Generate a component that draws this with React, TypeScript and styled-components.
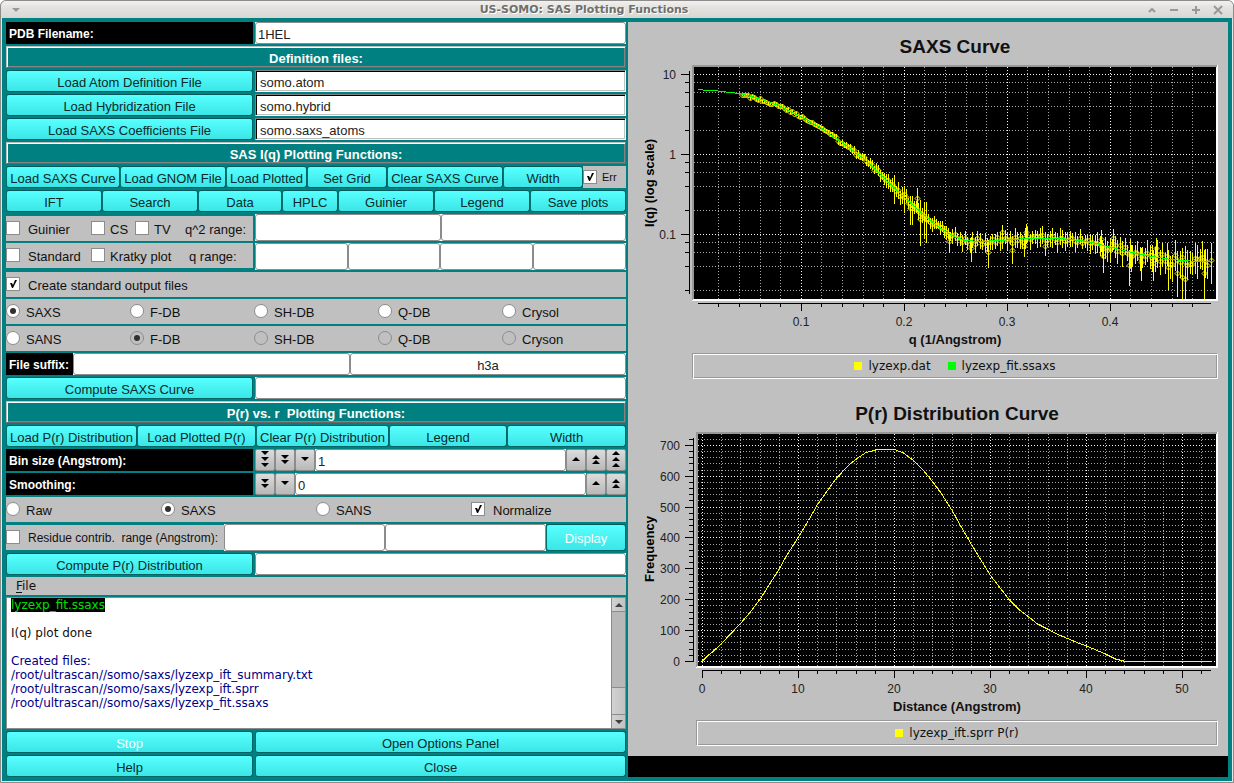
import React, { useId } from 'react';
import styled, { createGlobalStyle, css } from 'styled-components';

const TEAL = '#008080';
const GRAY = '#c0c0c0';
const SANS = '"Liberation Sans", Arial, sans-serif';
const DEJAVU = '"DejaVu Sans", Verdana, sans-serif';

const GlobalStyle = createGlobalStyle`
  *, *::before, *::after { box-sizing: border-box; }
  body { margin: 0; background: #fff; font-family: ${SANS}; font-size: 13px; color: #111; }
  button, input { font: inherit; margin: 0; color: inherit; }
`;

/* ---------- window frame ---------- */

const Window = styled.div`
  display: flex;
  flex-direction: column;
  min-height: 100vh;
  background: ${TEAL};
  border: 1px solid #8e8c8a;
  border-radius: 6px 6px 0 0;
  box-shadow: inset 0 0 0 1px #e6e4e2;
`;

const TitleBar = styled.header`
  display: flex;
  align-items: center;
  height: 17px;
  padding: 0 8px;
  border-radius: 5px 5px 0 0;
  background: linear-gradient(#f2f1ef, #e4e2df 40%, #d9d7d3);
`;

const WindowTitle = styled.h1`
  flex: 1;
  margin: 0;
  text-align: center;
  font: bold 11px/17px ${DEJAVU};
  color: #6f6f6c;
  text-shadow: 1px 1px 0 #fff;
`;

const TitleButtons = styled.div`
  display: flex;
  gap: 8px;
`;

const TitleButton = styled.button`
  display: flex;
  width: 14px;
  height: 14px;
  padding: 0;
  border: 0;
  background: none;
  svg { fill: none; stroke: #9a9896; stroke-width: 2; }
`;

const Content = styled.main`
  flex: 1;
  display: grid;
  grid-template-columns: 620fr 600fr;
  gap: 2px;
  padding: 4px 5px 5px;
`;

const Controls = styled.section`
  display: flex;
  flex-direction: column;
  gap: 2px;
  min-width: 0;
`;

/* ---------- left column parts ---------- */

const Row = styled.div<{ $cols?: string; $h?: number; $align?: string; $gap?: number }>`
  display: grid;
  grid-template-columns: ${(p) => p.$cols ?? '247fr 371fr'};
  column-gap: ${(p) => p.$gap ?? 2}px;
  height: ${(p) => p.$h ?? 22}px;
  flex: none;
  align-items: ${(p) => p.$align ?? 'stretch'};
`;

const BlackLabel = styled.label`
  background: #000;
  color: #fff;
  font-weight: bold;
  font-size: 12px;
  line-height: 22px;
  padding: 1px 0 0 3px;
  height: 22px;
  overflow: hidden;
  white-space: nowrap;
`;

const Banner = styled.h2`
  flex: none;
  margin: 0;
  height: 22px;
  padding-top: 1px;
  border: 1px solid;
  border-color: ${GRAY} #6a6464 #6a6464 ${GRAY};
  box-shadow: inset 1px 1px 0 #fff, inset -1px -1px 0 #8a8282;
  color: #fff;
  font-size: 13px;
  line-height: 22px;
  text-align: center;
  white-space: pre;
`;

const Button = styled.button`
  min-width: 0;
  height: 100%;
  padding: 2px 0 0;
  border: 1px solid;
  border-color: #005c5c #006464 #006464 #007070;
  border-radius: 3px;
  background: linear-gradient(#58ffff, #3ce6e6);
  color: #0a2a2a;
  text-align: center;
  white-space: nowrap;
  &:disabled { color: #fff; }
`;

const FieldBox = styled.span`
  display: block;
  height: 100%;
  min-width: 0;
  background: #fff;
`;

const FieldInput = styled.input<{ $center?: boolean }>`
  display: block;
  width: 100%;
  height: 100%;
  padding: 2px 2px 0;
  border: 1px solid #8c8c8c;
  border-radius: 3px;
  background: #fff;
  color: #222;
  text-align: ${(p) => (p.$center ? 'center' : 'left')};
  outline: 0;
`;

const SunkenInput = styled.input`
  width: 100%;
  min-width: 0;
  padding: 2px 4px 0;
  border: 1px solid;
  border-color: #808080 #fff #fff #808080;
  box-shadow: inset 1px 1px 0 #000, inset -1px -1px 0 ${GRAY};
  background: #fff;
  color: #222;
  outline: 0;
`;

const GrayCell = styled.div<{ $cols?: string; $h?: number }>`
  display: grid;
  grid-template-columns: ${(p) => p.$cols ?? '1fr'};
  align-items: center;
  flex: none;
  height: ${(p) => p.$h ?? 25}px;
  background: ${GRAY};
  white-space: pre;
`;

const Option = styled.label<{ $gap: number; $small?: boolean }>`
  display: flex;
  align-items: center;
  gap: ${(p) => p.$gap}px;
  min-width: 0;
  line-height: 15px;
  font-size: ${(p) => (p.$small ? 12 : 13)}px;
  span { padding-top: 2px; }
  input { margin-bottom: 1px; }
`;

const Plain = styled.span`
  padding-top: 2px;
  line-height: 15px;
`;

const markBase = css`
  appearance: none;
  flex: none;
  position: relative;
  width: 14px;
  height: 14px;
  border: 1px solid #8c8c8c;
  background: #fff;
`;

const Tick = styled.input`
  ${markBase}
  &:checked::before {
    content: '';
    display: block;
    width: 12px;
    height: 12px;
    background: #000;
    clip-path: polygon(3px 5px, 5px 5px, 6px 7px, 8px 2px, 10px 2px, 6px 10px, 5px 10px);
  }
`;

const Radio = styled.input`
  ${markBase}
  border-radius: 50%;
  &:checked::before {
    content: '';
    display: block;
    width: 6px;
    height: 6px;
    margin: 3px;
    border-radius: 50%;
    background: #303030;
  }
  &:disabled { background: transparent; }
`;

const ErrOption = styled.label`
  display: flex;
  align-items: center;
  gap: 5px;
  height: 22px;
  background: ${GRAY};
  font-size: 11px;
`;

const Counter = styled.div`
  display: flex;
  min-width: 0;
`;

const StepButton = styled.button`
  flex: none;
  width: 20px;
  height: 22px;
  padding: 0;
  border: 1px solid #8c8c8c;
  border-radius: 2px;
  background: linear-gradient(#dcdcdc, #b8b8b8);
  svg { display: block; margin: 0 auto; }
`;

const CounterField = styled.div`
  flex: 1;
  min-width: 0;
  height: 22px;
`;

const MenuBar = styled.nav`
  flex: none;
  height: 18px;
  padding-left: 10px;
  background: ${GRAY};
`;

const MenuItem = styled.button`
  display: block;
  padding: 0;
  border: 0;
  background: none;
  font: 12px/18px ${DEJAVU};
  u { text-underline-offset: 2px; }
`;

const LogBox = styled.div`
  display: flex;
  flex: 1 0 132px;
  border: 1px solid #8c8c8c;
  background: #fff;
`;

const LogText = styled.div`
  flex: 1;
  min-width: 0;
  padding-left: 4px;
  overflow: hidden;
  font: 12px/14px ${DEJAVU};
  white-space: pre;
`;

const LogLine = styled.div<{ $color?: string }>`
  height: 14px;
  color: ${(p) => p.$color ?? '#111'};
  mark { display: inline-block; background: #000; color: #00e000; }
`;

const ScrollBar = styled.div`
  display: flex;
  flex-direction: column;
  width: 14px;
  border-left: 1px solid #8c8c8c;
  background: #b8b8b8;
`;

const ScrollButton = styled.button<{ $down?: boolean }>`
  height: 14px;
  padding: 0;
  border: 0;
  border-top: ${(p) => (p.$down ? '1px solid #8c8c8c' : '0')};
  border-bottom: ${(p) => (p.$down ? '0' : '1px solid #8c8c8c')};
  background: linear-gradient(90deg, #d2d2d2, #c2c2c2);
  svg { display: block; margin: 0 auto; fill: #404040; }
`;

const ScrollTrack = styled.div`
  flex: 1;
  display: flex;
  align-items: flex-end;
`;

const ScrollThumb = styled.div`
  width: 100%;
  height: 27px;
  border-top: 1px solid #8c8c8c;
  background: linear-gradient(90deg, #d2d2d2, #c2c2c2);
`;

/* ---------- right column parts ---------- */

const Plots = styled.section`
  display: flex;
  flex-direction: column;
  min-width: 0;
  background: #000;
`;

const PlotPanel = styled.div`
  display: flex;
  flex-direction: column;
  gap: 20px;
  padding: 10px 0;
  background: ${GRAY};
`;

const ChartBox = styled.figure`
  margin: 0;
`;

const ChartTitle = styled.h3<{ $inset: number }>`
  margin: 0 10px 3px ${(p) => p.$inset}px;
  font-size: 19px;
  line-height: 30px;
  text-align: center;
`;

const Canvas = styled.svg`
  display: block;
  width: 100%;
  height: auto;
  font-family: ${SANS};
  font-size: 12px;
`;

const AxisTitle = styled.div<{ $inset: number }>`
  margin: 0 10px 4px ${(p) => p.$inset}px;
  font-weight: bold;
  line-height: 19px;
  text-align: center;
`;

const Legend = styled.figcaption<{ $inset: number }>`
  display: flex;
  align-items: center;
  justify-content: center;
  gap: 17px;
  height: 26px;
  margin: 0 10px 0 ${(p) => p.$inset}px;
  border: 1px solid;
  border-color: #989898 #fff #fff #989898;
  box-shadow: inset 1px 1px 0 #fff, inset -1px -1px 0 #989898;
  font: 12px/14px ${DEJAVU};
`;

const LegendItem = styled.span<{ $color: string }>`
  display: flex;
  align-items: center;
  gap: 6px;
  &::before {
    content: '';
    width: 8px;
    height: 8px;
    background: ${(p) => p.$color};
  }
`;

/* ---------- small building blocks ---------- */

type FieldProps = { label: string; value?: string; center?: boolean; id?: string };
const Field = ({ label, value = '', center, id }: FieldProps) => (
  <FieldBox>
    <FieldInput id={id} aria-label={label} defaultValue={value} $center={center} />
  </FieldBox>
);

const CheckOption = ({ text, checked, gap = 8, small }: { text: string; checked?: boolean; gap?: number; small?: boolean }) => (
  <Option $gap={gap} $small={small}>
    <Tick type="checkbox" defaultChecked={checked} />
    <span>{text}</span>
  </Option>
);

const RadioOption = ({ text, name, checked, disabled }: { text: string; name: string; checked?: boolean; disabled?: boolean }) => (
  <Option $gap={6}>
    <Radio type="radio" name={name} defaultChecked={checked} disabled={disabled} />
    <span>{text}</span>
  </Option>
);

const arrowTops: Record<number, number[]> = { 1: [7], 2: [5, 10], 3: [1, 7, 13] };

const Step = ({ count, up }: { count: number; up?: boolean }) => (
  <StepButton aria-label={`${up ? 'Increase' : 'Decrease'} by step ${count}`}>
    <svg width="10" height="20" viewBox="0 0 10 20">
      {arrowTops[count].map((y) => (
        <path key={y} d={up ? `M1 ${y + 4}h8l-4 -4z` : `M1 ${y}h8l-4 4z`} />
      ))}
    </svg>
  </StepButton>
);

const CounterRow = ({ label, value, steps }: { label: string; value: string; steps: number }) => {
  const id = useId();
  const sizes = Array.from({ length: steps }, (_, i) => i + 1);
  return (
    <Row>
      <BlackLabel htmlFor={id}>{label}</BlackLabel>
      <Counter>
        {[...sizes].reverse().map((n) => <Step key={n} count={n} />)}
        <CounterField><Field id={id} label={label} value={value} /></CounterField>
        {sizes.map((n) => <Step key={n} count={n} up />)}
      </Counter>
    </Row>
  );
};

const ButtonRow = ({ items }: { items: [string, number][] }) => (
  <Row $gap={0} $cols={items.map(([, w]) => `${w}fr`).join(' ')}>
    {items.map(([text]) => <Button key={text}>{text}</Button>)}
  </Row>
);

const definitionFiles = [
  ['Load Atom Definition File', 'somo.atom'],
  ['Load Hybridization File', 'somo.hybrid'],
  ['Load SAXS Coefficients File', 'somo.saxs_atoms'],
];

/* ---------- plots ---------- */

type Tickmark = { pos: number; label?: string };

type PlotProps = {
  left: number;
  axisX: [number, number];
  axisY: [number, number];
  xTicks: Tickmark[];
  yTicks: Tickmark[];
  yTitle: string;
  yTitleAt: number;
  children: React.ReactNode;
};

const Plot = ({ left, axisX, axisY, xTicks, yTicks, yTitle, yTitleAt, children }: PlotProps) => {
  const clip = useId();
  const x0 = left + 2;
  const axis = left - 3;
  const order = (t: Tickmark[]) => [...t].sort((a, b) => Number(!!a.label) - Number(!!b.label));
  return (
    <Canvas viewBox="0 0 600 265" role="img" aria-label={yTitle}>
      <g shapeRendering="crispEdges">
        <rect x={left} y="0" width={590 - left} height="236" fill="#fff" />
        <path d={`M${left} 235V0H589V2H${x0}V234z`} fill="#989894" />
        <rect x={x0} y="2" width={588 - x0} height="232" fill="#000" />
        <g strokeDasharray="1 2" fill="none">
          {order(xTicks).map((t) => (
            <path key={t.pos} d={`M${t.pos + 0.5} 2V234`} stroke={t.label ? '#fff' : '#a8a8a8'} />
          ))}
          {order(yTicks).map((t) => (
            <path key={t.pos} d={`M${x0} ${t.pos + 0.5}H588`} stroke={t.label ? '#fff' : '#a8a8a8'} />
          ))}
        </g>
        <g stroke="#000" fill="none">
          <path d={`M${axis + 0.5} ${axisY[0]}V${axisY[1]}M${axisX[0]} 238.5H${axisX[1]}`} />
          {xTicks.map((t) => <path key={t.pos} d={`M${t.pos + 0.5} 239v${t.label ? 7 : 3}`} />)}
          {yTicks.map((t) => <path key={t.pos} d={`M${axis} ${t.pos + 0.5}h-${t.label ? 8 : 4}`} />)}
        </g>
        <clipPath id={clip}><rect x={x0} y="2" width={588 - x0} height="232" /></clipPath>
        <g clipPath={`url(#${clip})`} fill="none">{children}</g>
      </g>
      <g fill="#222">
        {xTicks.filter((t) => t.label).map((t) => (
          <text key={t.pos} x={t.pos} y="261" textAnchor="middle">{t.label}</text>
        ))}
        {yTicks.filter((t) => t.label).map((t) => (
          <text key={t.pos} x={axis - 13} y={t.pos + 5} textAnchor="end">{t.label}</text>
        ))}
      </g>
      <text transform={`translate(26 ${yTitleAt}) rotate(-90)`} textAnchor="middle" fontSize="13" fontWeight="bold">
        {yTitle}
      </text>
    </Canvas>
  );
};

const toPath = (pts: number[][]) => 'M' + pts.map((p) => p.join(' ')).join('L');

/* scattering curve: log scale in y, one decade is 80 units */
const saxsX: Tickmark[] = Array.from({ length: 24 }, (_, i) => {
  const q = (i + 1) * 0.02;
  const major = (i + 1) % 5 === 0;
  return { pos: Math.round(69.8 + 1030 * q), label: major ? q.toFixed(1) : undefined };
});

const saxsY: Tickmark[] = [10, 8, 6, 4, 2, 1, 0.8, 0.6, 0.4, 0.2, 0.1, 0.08, 0.06, 0.04, 0.02].map((v) => ({
  pos: Math.round(89 - 80 * Math.log10(v)),
  label: [10, 1, 0.1].includes(v) ? String(v) : undefined,
}));

const fit: number[][] = [
  [70, 24.5], [75, 25], [90, 26], [111, 28.5], [117, 30], [132, 34], [152, 41], [173, 51.5], [193, 63], [214, 77.5],
  [235, 93], [255, 112], [276, 132], [297, 151], [312, 163], [327, 172], [338, 175.5], [352, 176.5], [372, 175.5],
  [392, 174], [412, 173.5], [437, 174], [452, 175.5], [462, 177], [482, 182], [502, 187], [522, 191], [543, 194.5],
  [562, 196], [584, 196.5],
];

/* half length of the error bars along x */
const spread: number[][] = [
  [110, 1], [200, 2], [235, 4], [262, 6], [276, 7], [295, 7], [310, 5], [335, 7], [360, 8], [410, 8], [450, 8],
  [480, 10], [510, 11], [550, 13], [586, 15],
];

const interpolate = (pts: number[][], x: number) => {
  const i = Math.max(1, pts.findIndex((p) => p[0] >= x));
  const [a, b] = [pts[i - 1], pts[i]];
  return a[1] + ((b[1] - a[1]) * (x - a[0])) / (b[0] - a[0]);
};

/* the widest bars: x, top, bottom */
const outliers: number[][] = [
  [266, 110, 139], [276, 121, 148], [282, 131, 160], [284, 131, 160], [289, 123, 147], [292, 135, 181],
  [296, 137, 174], [298, 137, 178], [321, 167, 188], [343, 172, 197], [360, 175, 203], [374, 160, 177],
  [384, 175, 199], [396, 173, 192], [398, 159, 179], [417, 173, 191], [473, 165, 187], [475, 178, 208],
  [482, 175, 197], [485, 164, 185], [501, 185, 221], [503, 180, 207], [513, 183, 216], [525, 185, 216],
  [528, 173, 197], [540, 185, 225], [549, 190, 232], [554, 192, 240], [557, 195, 240], [576, 185, 240],
  [583, 178, 219],
];

const noise = (i: number) => {
  const s = Math.sin(i * 127.1 + 11.7) * 43758.5453;
  return (s - Math.floor(s)) * 2 - 1;
};

const sampleXs = [
  ...Array.from({ length: 106 }, (_, i) => 114 + i * 2),
  ...Array.from({ length: 102 }, (_, i) => 327 + Math.floor(i * 2.5)),
];

const samples = [
  ...sampleXs.map((x, i) => {
    const e = interpolate(spread, x);
    const y = Math.round(interpolate(fit, x) + noise(i) * (1 + e * 0.3));
    return [x, y, Math.round(y - e * (0.9 + 0.3 * noise(i + 900))), Math.round(y + e * (1.1 + 0.4 * noise(i + 500)))];
  }),
  ...outliers.map(([x, a, b]) => [x, Math.round(a + (b - a) * 0.42), a, b]),
];

const SaxsPlot = () => (
  <Plot left={64} axisX={[70, 583]} axisY={[6, 229]} xTicks={saxsX} yTicks={saxsY} yTitle="I(q) (log scale)" yTitleAt={118}>
    <g stroke="#ffff00">
      {samples.map(([x, , top, bottom], i) => <path key={i} d={`M${x + 0.5} ${top}V${bottom}`} />)}
    </g>
    <g stroke="#ffff00" shapeRendering="geometricPrecision">
      {samples.map(([x, y], i) => (
        <path key={i} d={`M${x - 2} ${y + 0.5}l2.5 -2.5l2.5 2.5l-2.5 2.5z`} />
      ))}
    </g>
    <path d={toPath(fit)} stroke="#00ff00" />
  </Plot>
);

/* pair distance distribution */
const prX: Tickmark[] = Array.from({ length: 27 }, (_, i) => ({
  pos: Math.round(74 + 19.2 * i),
  label: i % 5 === 0 ? String(i * 2) : undefined,
}));

const prY: Tickmark[] = Array.from({ length: 37 }, (_, i) => ({
  pos: Math.floor(229.4 - 6.172 * i),
  label: i % 5 === 0 ? String(i * 20) : undefined,
}));

const prCurve: number[][] = [
  [74, 229.5], [80, 223.5], [85, 219.5], [93.5, 211.5], [112.5, 191.5], [122, 180.5], [132.5, 166.5], [151.5, 136.5],
  [159, 123], [170.5, 105], [180.5, 88.5], [189.5, 72.5], [202, 55], [209, 45.5], [222, 32], [229, 26.5], [238, 20.5],
  [247.5, 18], [254, 17.5], [266.5, 17.5], [275.5, 21], [285.5, 28.5], [295.5, 38.5], [304, 49], [313, 61],
  [324.5, 79], [333.5, 95.5], [343.5, 112.5], [362.5, 143.5], [381.5, 168], [391.5, 178], [401.5, 185.5],
  [409.5, 192], [420.5, 197.5], [430, 202.5], [439.5, 206.5], [449, 210.5], [458.5, 214], [477.5, 222], [487.5, 227],
  [497.5, 229.5], [584, 229.5],
];

const PrPlot = () => (
  <Plot left={68} axisX={[74, 583]} axisY={[6, 230]} xTicks={prX} yTicks={prY} yTitle="Frequency" yTitleAt={117}>
    <path d={toPath(prCurve)} stroke="#ffff00" />
  </Plot>
);

/* ---------- page ---------- */

export default function App() {
  return (
    <>
      <GlobalStyle />
      <Window>
        <TitleBar>
          <TitleButton aria-label="Window menu">
            <svg width="14" height="14"><path d="M3 5h8l-4 4z" fill="#9a9896" strokeWidth="0" /></svg>
          </TitleButton>
          <WindowTitle>US-SOMO: SAS Plotting Functions</WindowTitle>
          <TitleButtons>
            <TitleButton aria-label="Roll up"><svg width="14" height="14"><path d="M4 9l3-3l3 3" /></svg></TitleButton>
            <TitleButton aria-label="Minimize"><svg width="14" height="14"><path d="M3 7h8" /></svg></TitleButton>
            <TitleButton aria-label="Maximize"><svg width="14" height="14"><path d="M3 7h8M7 3v8" /></svg></TitleButton>
            <TitleButton aria-label="Close window"><svg width="14" height="14"><path d="M3 3l8 8M11 3l-8 8" /></svg></TitleButton>
          </TitleButtons>
        </TitleBar>

        <Content>
          <Controls>
            <Row>
              <BlackLabel htmlFor="pdb">PDB Filename:</BlackLabel>
              <Field id="pdb" label="PDB Filename" value="1HEL" />
            </Row>
            <Banner>Definition files:</Banner>
            {definitionFiles.map(([text, file]) => (
              <Row key={file}>
                <Button>{text}</Button>
                <SunkenInput aria-label={text} readOnly value={file} />
              </Row>
            ))}

            <Banner>SAS I(q) Plotting Functions:</Banner>
            <Row $gap={0} $cols="114fr 106fr 81fr 80fr 116fr 80fr 43fr">
              <Button>Load SAXS Curve</Button>
              <Button>Load GNOM File</Button>
              <Button>Load Plotted</Button>
              <Button>Set Grid</Button>
              <Button>Clear SAXS Curve</Button>
              <Button>Width</Button>
              <ErrOption><Tick type="checkbox" defaultChecked />Err</ErrOption>
            </Row>
            <ButtonRow
              items={[['IFT', 96], ['Search', 96], ['Data', 84], ['HPLC', 56], ['Guinier', 96], ['Legend', 96], ['Save plots', 96]]}
            />
            <Row $h={27} $align="end">
              <GrayCell $cols="85fr 44fr 50fr 68fr">
                <CheckOption text="Guinier" />
                <CheckOption text="CS" gap={5} />
                <CheckOption text="TV" gap={5} />
                <Plain>q^2 range:</Plain>
              </GrayCell>
              <Row $h={27} $gap={0} $cols="1fr 1fr">
                <Field label="q^2 range start" />
                <Field label="q^2 range end" />
              </Row>
            </Row>
            <Row $h={27} $align="start">
              <GrayCell $cols="85fr 98fr 64fr">
                <CheckOption text="Standard" />
                <CheckOption text="Kratky plot" gap={5} />
                <Plain>q range:</Plain>
              </GrayCell>
              <Row $h={27} $gap={0} $cols="93fr 92fr 93fr 93fr">
                <Field label="q range start" />
                <Field label="q range end" />
                <Field label="q range fit start" />
                <Field label="q range fit end" />
              </Row>
            </Row>
            <GrayCell>
              <CheckOption text="Create standard output files" checked />
            </GrayCell>
            <GrayCell $cols="repeat(5, 1fr)">
              <RadioOption name="curve" text="SAXS" checked />
              <RadioOption name="saxs-method" text="F-DB" />
              <RadioOption name="saxs-method" text="SH-DB" />
              <RadioOption name="saxs-method" text="Q-DB" />
              <RadioOption name="saxs-method" text="Crysol" />
            </GrayCell>
            <GrayCell $cols="repeat(5, 1fr)">
              <RadioOption name="curve" text="SANS" />
              <RadioOption name="sans-method" text="F-DB" checked disabled />
              <RadioOption name="sans-method" text="SH-DB" disabled />
              <RadioOption name="sans-method" text="Q-DB" disabled />
              <RadioOption name="sans-method" text="Cryson" disabled />
            </GrayCell>
            <Row $gap={0} $cols="67fr 277fr 276fr">
              <BlackLabel htmlFor="suffix">File suffix:</BlackLabel>
              <Field id="suffix" label="File suffix" />
              <Field label="Method suffix" value="h3a" center />
            </Row>
            <Row>
              <Button>Compute SAXS Curve</Button>
              <Field label="SAXS progress" />
            </Row>

            <Banner>{'P(r) vs. r  Plotting Functions:'}</Banner>
            <ButtonRow
              items={[['Load P(r) Distribution', 131], ['Load Plotted P(r)', 119], ['Clear P(r) Distribution', 133], ['Legend', 118], ['Width', 119]]}
            />
            <CounterRow label="Bin size (Angstrom):" value="1" steps={3} />
            <CounterRow label="Smoothing:" value="0" steps={2} />
            <GrayCell $cols="repeat(4, 1fr)">
              <RadioOption name="pr" text="Raw" />
              <RadioOption name="pr" text="SAXS" checked />
              <RadioOption name="pr" text="SANS" />
              <CheckOption text="Normalize" checked />
            </GrayCell>
            <Row $h={27} $gap={0} $align="center" $cols="218fr 161fr 161fr 80fr">
              <GrayCell>
                <CheckOption small text={'Residue contrib.  range (Angstrom):'} />
              </GrayCell>
              <Field label="Residue range start" />
              <Field label="Residue range end" />
              <Button disabled>Display</Button>
            </Row>
            <Row>
              <Button>Compute P(r) Distribution</Button>
              <Field label="P(r) progress" />
            </Row>

            <MenuBar>
              <MenuItem><u>F</u>ile</MenuItem>
            </MenuBar>
            <LogBox>
              <LogText role="log">
                <LogLine><mark>lyzexp_fit.ssaxs</mark></LogLine>
                <LogLine />
                <LogLine>I(q) plot done</LogLine>
                <LogLine />
                <LogLine $color="#000088">Created files:</LogLine>
                <LogLine $color="#000088">/root/ultrascan//somo/saxs/lyzexp_ift_summary.txt</LogLine>
                <LogLine $color="#000088">/root/ultrascan//somo/saxs/lyzexp_ift.sprr</LogLine>
                <LogLine $color="#000088">/root/ultrascan//somo/saxs/lyzexp_fit.ssaxs</LogLine>
              </LogText>
              <ScrollBar>
                <ScrollButton aria-label="Scroll up"><svg width="8" height="4"><path d="M0 4h8l-4-4z" /></svg></ScrollButton>
                <ScrollTrack><ScrollThumb /></ScrollTrack>
                <ScrollButton $down aria-label="Scroll down"><svg width="8" height="4"><path d="M0 0h8l-4 4z" /></svg></ScrollButton>
              </ScrollBar>
            </LogBox>
            <Row>
              <Button disabled>Stop</Button>
              <Button>Open Options Panel</Button>
            </Row>
            <Row>
              <Button>Help</Button>
              <Button>Close</Button>
            </Row>
          </Controls>

          <Plots>
            <PlotPanel>
              <ChartBox>
                <ChartTitle $inset={64}>SAXS Curve</ChartTitle>
                <SaxsPlot />
                <AxisTitle $inset={64}>q (1/Angstrom)</AxisTitle>
                <Legend $inset={64}>
                  <LegendItem $color="#ffff00">lyzexp.dat</LegendItem>
                  <LegendItem $color="#00ff00">lyzexp_fit.ssaxs</LegendItem>
                </Legend>
              </ChartBox>
              <ChartBox>
                <ChartTitle $inset={68}>P(r) Distribution Curve</ChartTitle>
                <PrPlot />
                <AxisTitle $inset={68}>Distance (Angstrom)</AxisTitle>
                <Legend $inset={68}>
                  <LegendItem $color="#ffff00">lyzexp_ift.sprr P(r)</LegendItem>
                </Legend>
              </ChartBox>
            </PlotPanel>
          </Plots>
        </Content>
      </Window>
    </>
  );
}
